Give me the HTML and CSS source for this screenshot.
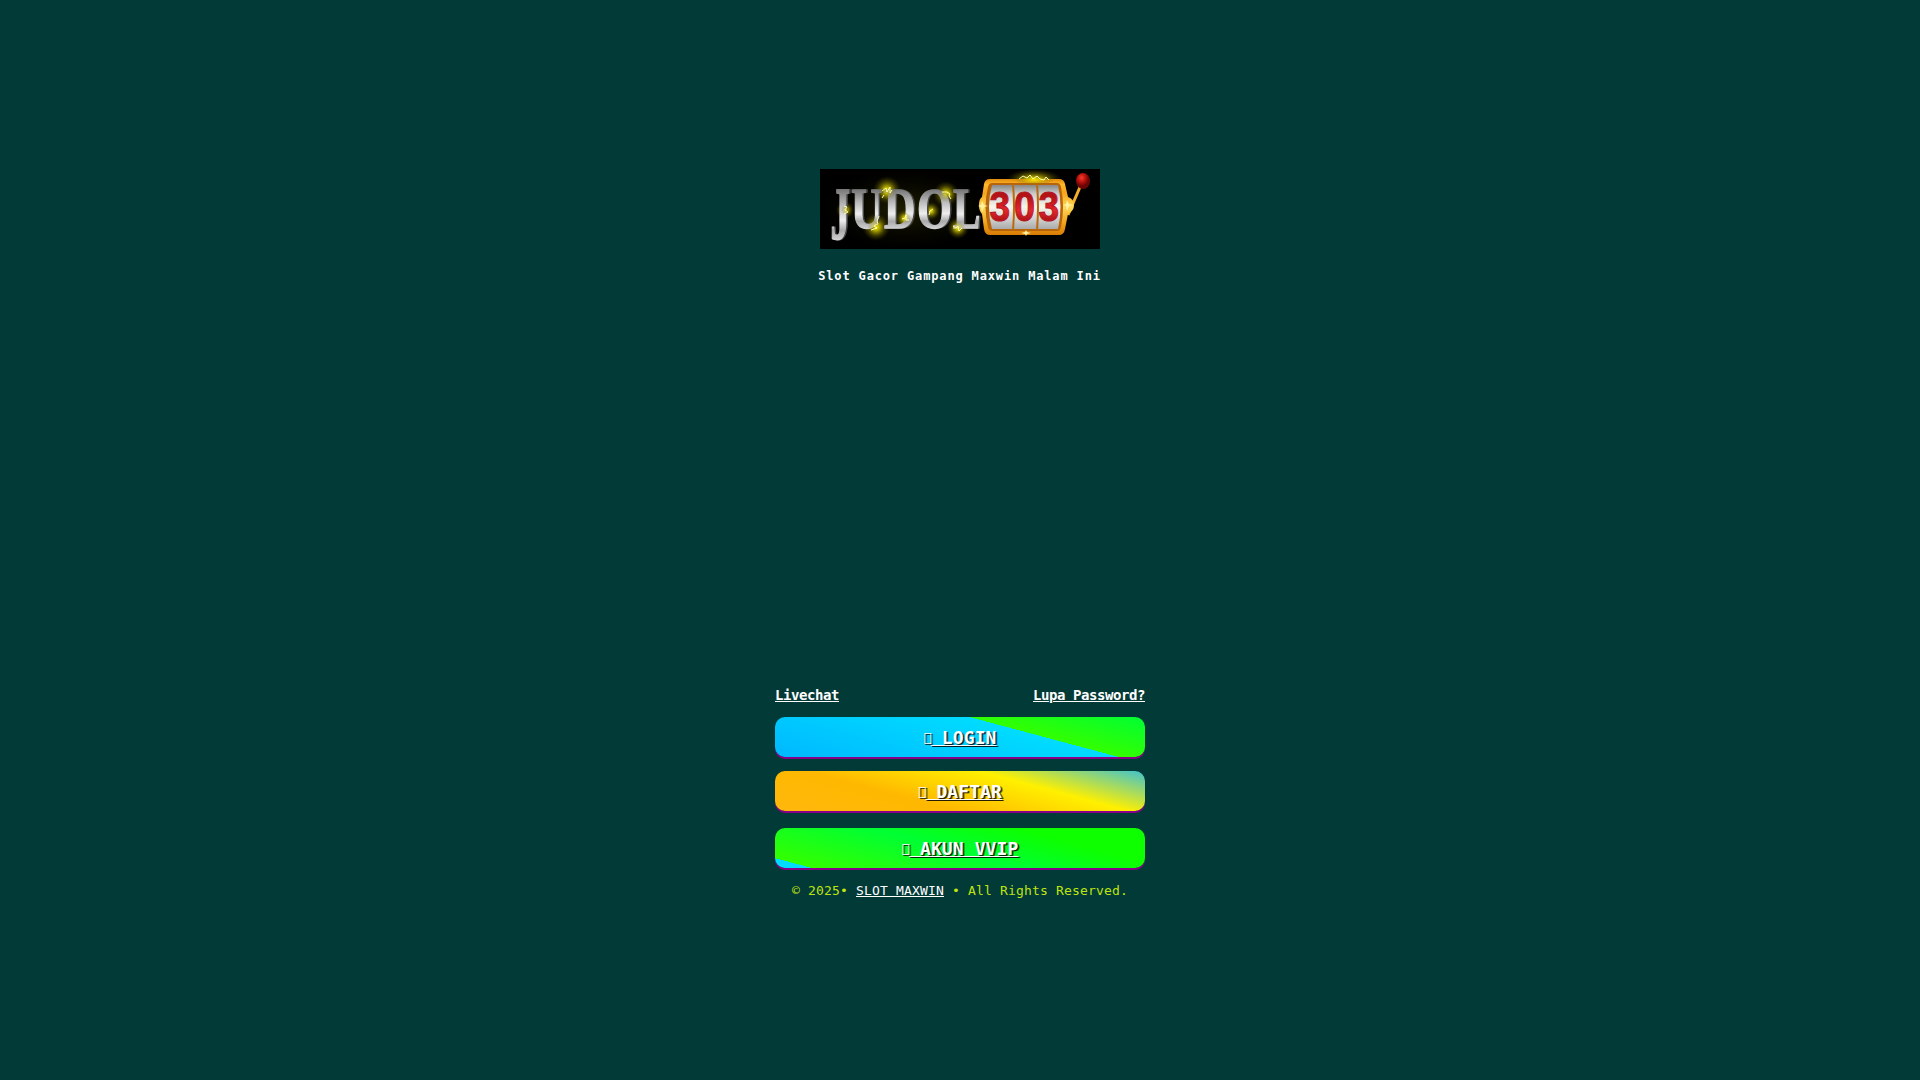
FILE: index.html
```
<!DOCTYPE html>
<html lang="id">
<head>
    <meta charset="UTF-8">
    <meta name="viewport" content="width=device-width, initial-scale=1.0">
    <title>Slot Gacor Gampang Maxwin Malam Ini</title>
    <link rel="stylesheet" href="styles.css">
</head>
<body>
    <div class="container">
        <svg class="logo" viewBox="0 0 280 80" width="280" height="80">
            <defs>
                <linearGradient id="silver" x1="0" y1="0" x2="0" y2="1">
                    <stop offset="0.2" stop-color="#777"/>
                    <stop offset="0.4" stop-color="#bbb"/>
                    <stop offset="0.58" stop-color="#eee"/>
                    <stop offset="0.7" stop-color="#aaa"/>
                    <stop offset="0.85" stop-color="#ddd"/>
                </linearGradient>
                <linearGradient id="gold" x1="0" y1="0" x2="0" y2="1">
                    <stop offset="0" stop-color="#e08a0c"/>
                    <stop offset="0.1" stop-color="#ffb72a"/>
                    <stop offset="0.25" stop-color="#f5a41a"/>
                    <stop offset="0.5" stop-color="#ffd95a"/>
                    <stop offset="0.8" stop-color="#f0a018"/>
                    <stop offset="1" stop-color="#d87c06"/>
                </linearGradient>
                <linearGradient id="reel" x1="0" y1="0" x2="0" y2="1">
                    <stop offset="0" stop-color="#888"/>
                    <stop offset="0.2" stop-color="#ccc"/>
                    <stop offset="0.5" stop-color="#f8f5ec"/>
                    <stop offset="0.8" stop-color="#ccc"/>
                    <stop offset="1" stop-color="#aaa"/>
                </linearGradient>
                <linearGradient id="red" x1="0" y1="0" x2="0" y2="1">
                    <stop offset="0.3" stop-color="#b31217"/>
                    <stop offset="0.6" stop-color="#e4262c"/>
                    <stop offset="0.85" stop-color="#a90f15"/>
                </linearGradient>
                <radialGradient id="ball" cx="0.4" cy="0.3">
                    <stop offset="0" stop-color="#f0402c"/>
                    <stop offset="0.5" stop-color="#c3140f"/>
                    <stop offset="1" stop-color="#6c0505"/>
                </radialGradient>
                <radialGradient id="glow">
                    <stop offset="0" stop-color="#fff200" stop-opacity="0.95"/>
                    <stop offset="0.4" stop-color="#cfc400" stop-opacity="0.55"/>
                    <stop offset="1" stop-color="#555000" stop-opacity="0"/>
                </radialGradient>
            </defs>
            <rect width="280" height="80" fill="#000"/>
            <ellipse cx="85" cy="40" rx="84" ry="40" fill="url(#glow)" opacity="0.13"/>
            <g fill="url(#glow)">
                <circle cx="25" cy="41" r="9"/>
                <circle cx="67" cy="21" r="14"/>
                <circle cx="56" cy="58" r="14"/>
                <circle cx="85" cy="50" r="10"/>
                <circle cx="126" cy="25" r="13"/>
                <circle cx="111" cy="42" r="9"/>
                <circle cx="138" cy="59" r="11"/>
                <ellipse cx="214" cy="10" rx="28" ry="10"/>
            </g>
            <!-- letters -->
            <g class="word-shadow">
                <text transform="translate(12 70) scale(0.62 1.2)">J</text>
                <text transform="translate(32.5 59) scale(0.7 0.92)">U</text>
                <text transform="translate(65.500 59) scale(0.7 0.92)">D</text>
                <text transform="translate(98.500 59) scale(0.72 0.92)">O</text>
                <text transform="translate(134.500 59) scale(0.66 0.92)">L</text>
            </g>
            <g class="word">
                <text transform="translate(10.500 70) scale(0.62 1.2)">J</text>
                <text transform="translate(31 59) scale(0.7 0.92)">U</text>
                <text transform="translate(64 59) scale(0.7 0.92)">D</text>
                <text transform="translate(97 59) scale(0.72 0.92)">O</text>
                <text transform="translate(133 59) scale(0.66 0.92)">L</text>
            </g>
            <g fill="url(#glow)" opacity="0.7">
                <circle cx="26" cy="41" r="5"/>
                <circle cx="67" cy="22" r="9"/>
                <circle cx="56" cy="58" r="9"/>
                <circle cx="85" cy="49" r="6"/>
                <circle cx="126" cy="25" r="8"/>
                <circle cx="138" cy="59" r="7"/>
            </g>
            <g class="spark">
                <path d="M24 37l3 1-2 3 3 2-4 2"/>
                <path d="M62 22l4-3 1 4 3-5v6l2-3M64 26l-2 3"/>
                <path d="M59 47l-2 5 1 3-4 2 3 2-6 2"/>
                <path d="M82 50l3-1 1-3v5l3 0"/>
                <path d="M122 23l5 0 3 2-1 2 2 3"/>
                <path d="M109 46l1-4 3-2"/>
                <path d="M133 57l3 2 2-2 1 5 3-3"/>
            </g>
            <!-- slot machine -->
            <path d="M248 46l12-28" class="lever"/>
            <path d="M170 10h69q5 0 6 5l3 13q6 2 6 8t-6 9l-3 15q-1 6-6 6h-69q-5 0-6-6l-2-15q-3-3-3-9t3-8l2-13q1-5 6-5z" fill="url(#gold)"/>
            <path d="M172 14h65q3 0 4 4 4 20 0 40-1 4-4 4h-65q-3 0-4-4-5-20 0-40 1-4 4-4z" fill="#b8640a"/>
            <path d="M172 16h66q5 22 0 44h-66q-6-22 0-44z" fill="url(#reel)"/>
            <path d="M193 15q2 22 0 46M217 15q2 22 0 46" class="divider"/>
            <g class="number">
                <text transform="translate(169.500 51.500) scale(0.88 1)">3</text>
                <text transform="translate(194 51.500) scale(0.9 1)">0</text>
                <text transform="translate(218.500 51.500) scale(0.88 1)">3</text>
            </g>
            <path d="M162 32l2 4 4 1-4 1-2 5-1-5-3-1 3-1zM247 31l2 4 4 1-4 1-2 5-1-5-3-1 3-1zM206 61l1 2 4 1-4 1-1 2-1-2-4-1 4-1z" fill="#fff2a0"/>
            <ellipse cx="214" cy="11" rx="20" ry="5" fill="url(#glow)"/>
            <g class="spark">
                <path d="M199 10l4-3 4 2 3-3 3 4 4-3 3 3 4 1 2-3 3 3"/>
            </g>
            <ellipse cx="263" cy="12" rx="7" ry="8" fill="url(#ball)"/>
        </svg>
        <h1>Slot Gacor Gampang Maxwin Malam Ini</h1>
        <div class="links">
            <a href="#">Livechat</a>
            <a href="#">Lupa Password?</a>
        </div>
        <a href="#" class="btn login"><i>&#xf090;</i> LOGIN</a>
        <a href="#" class="btn daftar"><i>&#xf234;</i> DAFTAR</a>
        <a href="#" class="btn vvip"><i>&#xf005;</i> AKUN VVIP</a>
        <p class="footer">© 2025• <a href="#">SLOT MAXWIN</a> • All Rights Reserved.</p>
    </div>
</body>
</html>
```
FILE: styles.css
```
body {
    margin: 0;
    background-color: #023a38;
    color: #fff;
    font-family: "DejaVu Sans Mono", monospace;
}
a {
    color: #fff;
}
.container {
    width: 370px;
    margin: 0 auto;
    padding-top: 169px;
    display: flex;
    flex-direction: column;
}
.logo {
    display: block;
    align-self: center;
    overflow: visible;
}
h1 {
    margin: 20px 1px 0 0;
    font-size: 12px;
    line-height: 14px;
    letter-spacing: 0.85px;
    text-align: center;
}
.links {
    display: flex;
    justify-content: space-between;
    margin-top: 404px;
    height: 30px;
    font-size: 14px;
    line-height: 16px;
    letter-spacing: -0.43px;
    font-weight: bold;
}
.btn {
    height: 40px;
    line-height: 42px;
    border-radius: 10px;
    box-shadow: 0 2px 0 #880088;
    font-size: 18px;
    letter-spacing: 0.1px;
    font-weight: bold;
    text-align: center;
    text-shadow: 1px 1px 0 rgba(0, 0, 0, 0.7), 2px 1px 0 rgba(0, 0, 0, 0.5);
}
.btn i {
    display: inline-block;
    width: 8px;
    margin-right: -0.5px;
    vertical-align: 2px;
    line-height: 16px;
    font-style: normal;
    font-weight: normal;
    font-size: 13px;
}
.login {
    background: linear-gradient(15deg, #00b8ff 0%, #00dcff 66.2%, #33ff00 66.2%, #00ff33 100%);
}
.daftar {
    margin-top: 14px;
    background: linear-gradient(15deg, #ffb80c 0%, #ffb800 35%, #fff000 68%, #22bbee 105%);
}
.vvip {
    margin-top: 17px;
    background: linear-gradient(15deg, #00dcff 7.1%, #33ff00 7.1%, #00ff33 47%, #0dff00 75%);
}
.footer {
    margin: 14px 0 0;
    font-size: 13px;
    line-height: 17px;
    letter-spacing: 0.17px;
    text-align: center;
    color: #bfe30f;
}

/* logo */
.word, .word-shadow {
    font-family: "Liberation Serif", serif;
    font-weight: bold;
    font-size: 62px;
    fill: url(#silver);
    stroke: url(#silver);
    stroke-width: 1.5px;
}
.word-shadow {
    fill: #484848;
    stroke: #484848;
}
.number {
    font-family: "Liberation Sans", sans-serif;
    font-weight: bold;
    font-size: 42px;
    fill: url(#red);
    stroke: #b3161b;
    stroke-width: 1px;
}
.spark {
    fill: none;
    stroke: #ffffb0;
    stroke-width: 1px;
}
.lever {
    fill: none;
    stroke: #f3b02a;
    stroke-width: 3px;
}
.divider {
    fill: none;
    stroke: #b96a0c;
    stroke-width: 2px;
}
```
